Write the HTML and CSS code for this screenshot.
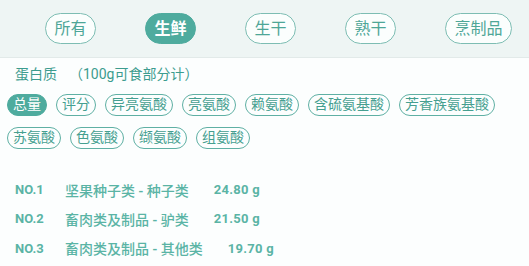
FILE: index.html
```html
<!DOCTYPE html>
<html lang="zh-CN">
<head>
<meta charset="utf-8">
<title>营养排行</title>
<link rel="stylesheet" href="styles.css">
</head>
<body>
<div class="tabs">
  <span class="pill">所有</span>
  <span class="pill active">生鲜</span>
  <span class="pill">生干</span>
  <span class="pill">熟干</span>
  <span class="pill">烹制品</span>
</div>
<div class="section-title">蛋白质<span class="note">（100g可食部分计）</span></div>
<div class="chips">
  <span class="chip active">总量</span>
  <span class="chip">评分</span>
  <span class="chip">异亮氨酸</span>
  <span class="chip">亮氨酸</span>
  <span class="chip">赖氨酸</span>
  <span class="chip">含硫氨基酸</span>
  <span class="chip">芳香族氨基酸</span>
  <span class="chip">苏氨酸</span>
  <span class="chip">色氨酸</span>
  <span class="chip">缬氨酸</span>
  <span class="chip">组氨酸</span>
</div>
<ul class="rank">
  <li class="row"><span class="num">NO.1</span><span class="name">坚果种子类 - 种子类</span><span class="val">24.80 g</span></li>
  <li class="row"><span class="num">NO.2</span><span class="name">畜肉类及制品 - 驴类</span><span class="val">21.50 g</span></li>
  <li class="row"><span class="num">NO.3</span><span class="name">畜肉类及制品 - 其他类</span><span class="val">19.70 g</span></li>
</ul>
</body>
</html>
```
FILE: styles.css
```css
html, body {
  margin: 0;
  padding: 0;
  background: #fcfefe;
}
body {
  font-family: Roboto, "Noto Sans CJK SC", sans-serif;
  color: #4ea697;
}
.tabs {
  display: flex;
  align-items: center;
  gap: 49px;
  height: 58px;
  padding-left: 45px;
  background: #eef5f4;
  border-bottom: 1px solid #e2eae9;
  box-sizing: border-box;
}
.pill {
  display: inline-block;
  box-sizing: border-box;
  height: 31px;
  line-height: 29px;
  padding: 0 8.5px;
  border: 1px solid #7dbdb3;
  border-radius: 16px;
  font-size: 16px;
  color: #4ea697;
  background: #fbfefd;
}
.pill.active {
  background: #4eab9e;
  border-color: #4eab9e;
  color: #ffffff;
  font-weight: 700;
}
.section-title {
  margin-top: 6px;
  padding-left: 15px;
  font-size: 14px;
  line-height: 20px;
  color: #3c9c8e;
}
.note {
  margin-left: 12px;
}
.chips {
  display: flex;
  flex-wrap: wrap;
  column-gap: 9px;
  row-gap: 11px;
  margin-top: 10px;
  padding-left: 7px;
}
.chip {
  display: inline-block;
  box-sizing: border-box;
  height: 22px;
  line-height: 19px;
  padding: 0 5px;
  border: 1.5px solid #5fb0a4;
  border-radius: 11px;
  font-size: 14px;
  color: #459f90;
}
.chip.active {
  background: #4eab9e;
  border-color: #4eab9e;
  color: #ffffff;
}
.rank {
  list-style: none;
  margin: 26px 0 0;
  padding: 0 0 0 15px;
}
.row {
  display: flex;
  align-items: center;
  height: 29.3px;
  color: #5ab4a5;
}
.num {
  width: 50px;
  font-size: 13px;
  font-weight: 700;
}
.name {
  font-size: 14px;
  font-weight: 500;
}
.val {
  margin-left: 25px;
  font-size: 13px;
  font-weight: 700;
  letter-spacing: 0.3px;
}
```
